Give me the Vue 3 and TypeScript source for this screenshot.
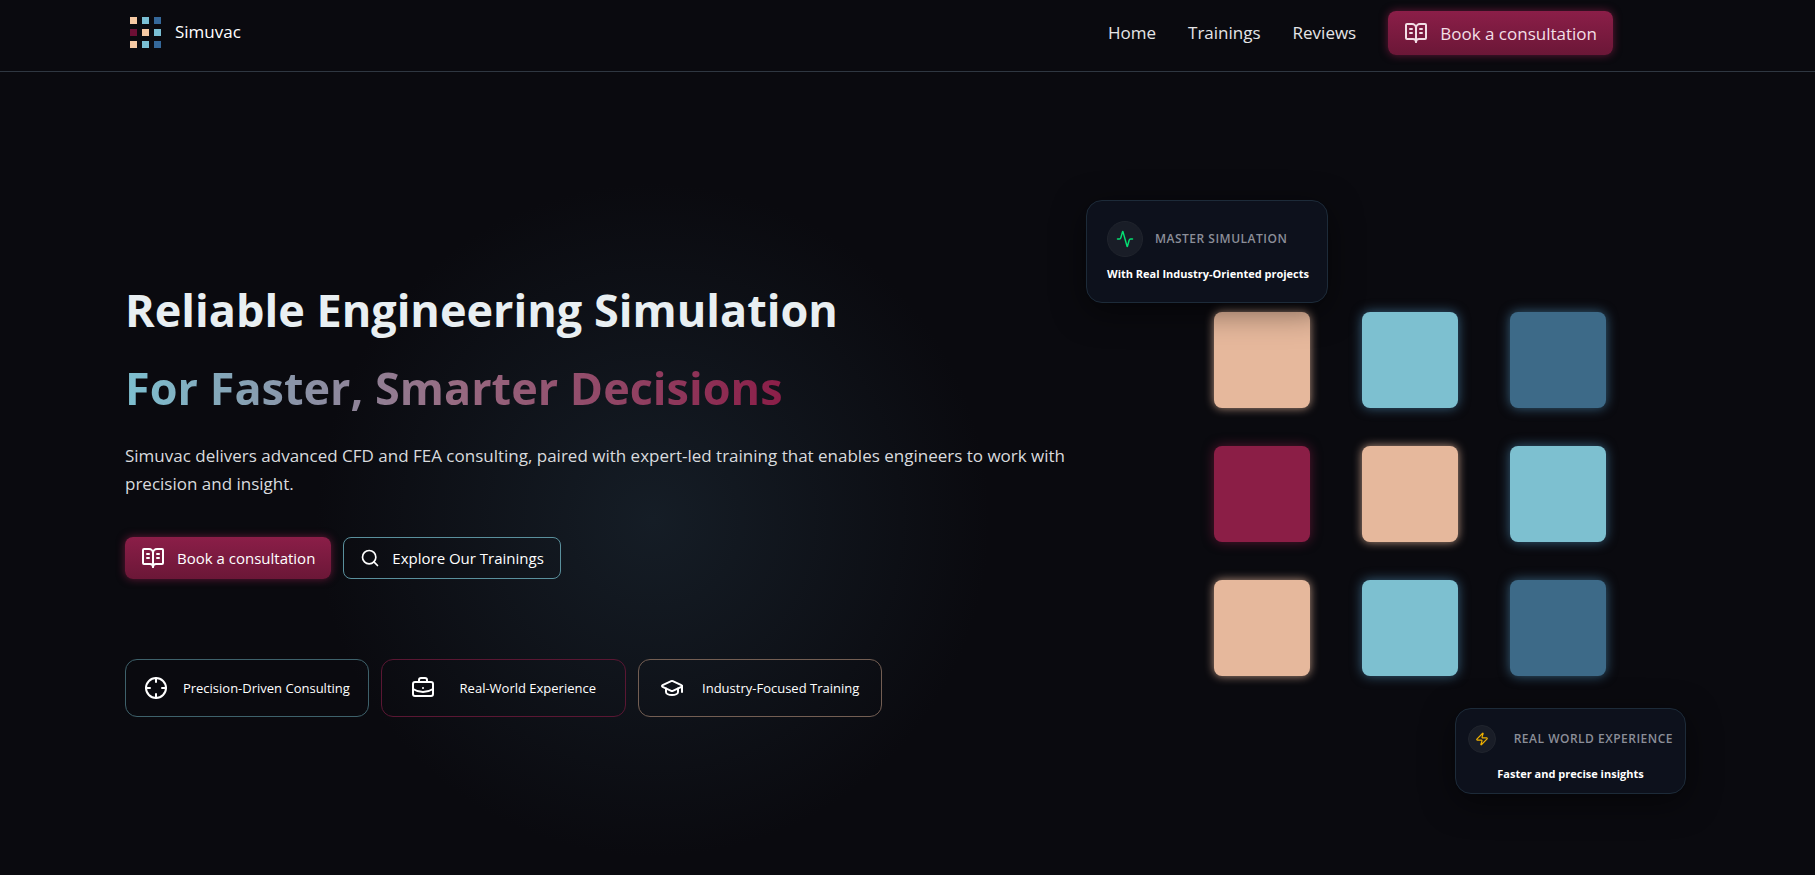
<script setup lang="ts">
type Tone = 'peach' | 'cyan' | 'blue' | 'wine'

interface Feature {
  label: string
  icon: string[]
  tone: Tone
}

const links: string[] = ['Home', 'Trainings', 'Reviews']

const tones: Tone[] = ['peach', 'cyan', 'blue', 'wine', 'peach', 'cyan', 'peach', 'cyan', 'blue']

const book: string[] = [
  'M12 7v14',
  'M16 12h2',
  'M16 8h2',
  'M6 12h2',
  'M6 8h2',
  'M3 18a1 1 0 0 1-1-1V4a1 1 0 0 1 1-1h5a4 4 0 0 1 4 4 4 4 0 0 1 4-4h5a1 1 0 0 1 1 1v13a1 1 0 0 1-1 1h-6a3 3 0 0 0-3 3 3 3 0 0 0-3-3z',
]

const features: Feature[] = [
  {
    label: 'Precision-Driven Consulting',
    tone: 'cyan',
    icon: ['M2 12a10 10 0 1 0 20 0a10 10 0 1 0-20 0', 'M22 12h-4', 'M6 12H2', 'M12 6V2', 'M12 22v-4'],
  },
  {
    label: 'Real-World Experience',
    tone: 'wine',
    icon: [
      'M12 12h.01',
      'M16 6V4a2 2 0 0 0-2-2h-4a2 2 0 0 0-2 2v2',
      'M22 13a18.15 18.15 0 0 1-20 0',
      'M4 6h16a2 2 0 0 1 2 2v10a2 2 0 0 1-2 2H4a2 2 0 0 1-2-2V8a2 2 0 0 1 2-2z',
    ],
  },
  {
    label: 'Industry-Focused Training',
    tone: 'peach',
    icon: [
      'M21.42 10.922a1 1 0 0 0-.019-1.838L12.83 5.18a2 2 0 0 0-1.66 0L2.6 9.08a1 1 0 0 0 0 1.832l8.57 3.908a2 2 0 0 0 1.66 0z',
      'M22 10v6',
      'M6 12.5V16a6 3 0 0 0 12 0v-3.5',
    ],
  },
]
</script>

<template>
  <div class="page">
    <header class="header">
      <a class="brand" href="#">
        <span class="logo" aria-hidden="true">
          <i v-for="(tone, i) in tones" :key="i" :class="tone"></i>
        </span>
        <span>Simuvac</span>
      </a>
      <nav class="nav">
        <a v-for="link in links" :key="link" class="link" href="#">{{ link }}</a>
        <button class="btn primary large" type="button">
          <svg class="icon" viewBox="0 0 24 24" aria-hidden="true"><path v-for="d in book" :key="d" :d="d" /></svg>
          Book a consultation
        </button>
      </nav>
    </header>

    <main class="hero">
      <section class="copy">
        <h1>Reliable Engineering Simulation<br /><span class="gradient">For Faster, Smarter Decisions</span></h1>
        <p class="lead">
          Simuvac delivers advanced CFD and FEA consulting, paired with expert-led training that enables engineers to
          work with precision and insight.
        </p>
        <div class="actions">
          <button class="btn primary" type="button">
            <svg class="icon" viewBox="0 0 24 24" aria-hidden="true"><path v-for="d in book" :key="d" :d="d" /></svg>
            Book a consultation
          </button>
          <button class="btn outline" type="button">
            <svg class="icon search" viewBox="0 0 24 24" aria-hidden="true">
              <circle cx="11" cy="11" r="8" />
              <path d="m21 21-4.3-4.3" />
            </svg>
            Explore Our Trainings
          </button>
        </div>
        <ul class="features">
          <li v-for="f in features" :key="f.label" :class="['feature', `edge-${f.tone}`]">
            <svg class="icon" viewBox="0 0 24 24" aria-hidden="true"><path v-for="d in f.icon" :key="d" :d="d" /></svg>
            <span>{{ f.label }}</span>
          </li>
        </ul>
      </section>

      <section class="visual">
        <div class="tiles" aria-hidden="true">
          <div v-for="(tone, i) in tones" :key="i" :class="['tile', tone]"></div>
        </div>
        <article class="card card-top">
          <div class="card-head">
            <span class="badge">
              <svg class="icon pulse" viewBox="0 0 24 24" aria-hidden="true">
                <path
                  d="M22 12h-2.48a2 2 0 0 0-1.93 1.46l-2.35 8.36a.25.25 0 0 1-.48 0L9.24 2.18a.25.25 0 0 0-.48 0l-2.35 8.36A2 2 0 0 1 4.49 12H2"
                />
              </svg>
            </span>
            <h2>MASTER SIMULATION</h2>
          </div>
          <p>With Real Industry-Oriented projects</p>
        </article>
        <article class="card card-bottom">
          <div class="card-head">
            <span class="badge">
              <svg class="icon bolt" viewBox="0 0 24 24" aria-hidden="true">
                <path
                  d="M4 14a1 1 0 0 1-.78-1.63l9.9-10.2a.5.5 0 0 1 .86.46l-1.92 6.02A1 1 0 0 0 13 10h7a1 1 0 0 1 .78 1.63l-9.9 10.2a.5.5 0 0 1-.86-.46l1.92-6.02A1 1 0 0 0 11 14z"
                />
              </svg>
            </span>
            <h2>REAL WORLD EXPERIENCE</h2>
          </div>
          <p>Faster and precise insights</p>
        </article>
      </section>
    </main>
  </div>
</template>

<style>
body {
  margin: 0;
  background: #0a0a0f;
}
</style>

<style scoped>
.page {
  box-sizing: border-box;
  min-height: 100vh;
  display: flex;
  flex-direction: column;
  overflow: hidden;
  color: #fff;
  background: #0a0a0f;
  font-family: 'Segoe UI', 'Open Sans', 'Noto Sans', sans-serif;
}

.header {
  display: flex;
  align-items: flex-start;
  justify-content: space-between;
  padding: 11px 202px 16px 129px;
  border-bottom: 1px solid #2f3741;
}

.brand {
  display: flex;
  align-items: center;
  gap: 13px;
  margin-top: 6px;
  color: #fff;
  font-size: 17px;
  line-height: 28px;
  text-decoration: none;
}

.brand > span:last-child {
  margin-top: -4px;
}

.logo {
  display: grid;
  grid-template-columns: repeat(3, 7px);
  gap: 5px;
  padding: 0 1px 2px;
}

.logo i {
  height: 7px;
}

.logo .peach {
  background: #f6c9a3;
}

.logo .cyan {
  background: #7abfd4;
}

.logo .blue {
  background: #35689a;
}

.logo .wine {
  background: #6d0f35;
}

.nav {
  display: flex;
  align-items: center;
  gap: 32px;
}

.link {
  color: #e5e5e7;
  font-size: 17px;
  line-height: 28px;
  text-decoration: none;
}

.icon {
  flex: none;
  width: 24px;
  height: 24px;
  fill: none;
  stroke: currentColor;
  stroke-width: 2;
  stroke-linecap: round;
  stroke-linejoin: round;
}

.btn {
  display: flex;
  align-items: center;
  gap: 12px;
  height: 42px;
  padding: 0 16px;
  border: 0;
  border-radius: 8px;
  color: #fff;
  background: none;
  font-family: inherit;
  font-size: 15px;
  white-space: nowrap;
  cursor: pointer;
}

.primary {
  background: linear-gradient(180deg, #8b1e48, #6b1737);
  box-shadow: 0 0 8px rgba(139, 30, 72, 0.7);
}

.large {
  height: 44px;
  color: #f3dfe6;
  font-size: 17px;
}

.outline {
  border: 1px solid #5a909d;
}

.search {
  width: 20px;
  height: 20px;
}

.hero {
  flex: 1;
  position: relative;
  display: grid;
  grid-template-columns: minmax(0, 957px) 392px;
  justify-content: space-between;
  align-items: center;
  padding: 40px 209px 0 125px;
}

.hero::before {
  content: '';
  position: absolute;
  top: 448px;
  left: 36%;
  width: 680px;
  height: 680px;
  transform: translate(-50%, -50%);
  background: radial-gradient(circle, #151d26 0%, rgba(20, 28, 36, 0) 70%);
}

.copy {
  position: relative;
}

h1 {
  margin: 0 0 15px;
  color: #e9eff2;
  font-size: 45px;
  font-weight: 700;
  line-height: 78px;
}

.gradient {
  color: transparent;
  background: linear-gradient(90deg, #7dc0d0, #976b82 50%, #8b1e48);
  background-clip: text;
  -webkit-background-clip: text;
}

.lead {
  margin: 0 0 39px;
  color: #d9dbde;
  font-size: 17px;
  line-height: 28px;
}

.actions {
  display: flex;
  gap: 12px;
}

.features {
  display: grid;
  grid-template-columns: repeat(3, minmax(0, 1fr));
  gap: 12px;
  max-width: 757px;
  margin: 80px 0 0;
  padding: 0;
  list-style: none;
}

.feature {
  box-sizing: border-box;
  display: flex;
  align-items: center;
  justify-content: space-evenly;
  min-height: 58px;
  padding: 0 4px;
  border: 1px solid;
  border-radius: 12px;
  font-size: 13px;
}

.edge-cyan {
  border-color: #3e616b;
}

.edge-wine {
  border-color: #5a1733;
}

.edge-peach {
  border-color: #735e53;
}

.visual {
  position: relative;
}

.tiles {
  display: grid;
  grid-template-columns: repeat(3, 96px);
  gap: 38px 52px;
}

.tile {
  height: 96px;
  border-radius: 8px;
}

.tile.peach {
  background: #e6b89c;
  box-shadow: 0 0 10px rgba(230, 184, 156, 0.8);
}

.tile.cyan {
  background: #7dc0d0;
  box-shadow: 0 0 12px rgba(74, 134, 172, 0.7);
}

.tile.blue {
  background: #3d6a88;
  box-shadow: 0 0 12px rgba(74, 134, 172, 0.7);
}

.tile.wine {
  background: #8b1e46;
  box-shadow: 0 0 12px rgba(139, 30, 70, 0.6);
}

.card {
  position: absolute;
  box-sizing: border-box;
  border: 1px solid #1d2b39;
  border-radius: 16px;
  background: #0d111c;
  box-shadow: 0 8px 32px rgba(0, 0, 0, 0.5);
}

.card-top {
  top: -112px;
  left: -128px;
  width: 242px;
  height: 103px;
  padding: 20px;
}

.card-bottom {
  right: -80px;
  bottom: -118px;
  width: 231px;
  height: 86px;
  padding: 16px 12px;
}

.card-head {
  display: flex;
  align-items: center;
  gap: 12px;
}

.card-bottom .card-head {
  justify-content: space-between;
}

.badge {
  box-sizing: border-box;
  display: grid;
  place-items: center;
  width: 36px;
  height: 36px;
  border: 1px solid #20242d;
  border-radius: 50%;
  background: #191d27;
}

.card-bottom .badge {
  width: 28px;
  height: 28px;
}

.pulse {
  width: 18px;
  height: 18px;
  color: #05df72;
}

.bolt {
  width: 14px;
  height: 14px;
  color: #f0b100;
}

.card h2 {
  margin: 0;
  color: #8b8e98;
  font-size: 12px;
  font-weight: 600;
  line-height: 16px;
  letter-spacing: 0.5px;
}

.card p {
  margin: 8px 0 0;
  font-size: 11px;
  font-weight: 700;
  line-height: 18px;
  text-align: center;
  white-space: nowrap;
}

.card-bottom p {
  margin-top: 12px;
}
</style>
